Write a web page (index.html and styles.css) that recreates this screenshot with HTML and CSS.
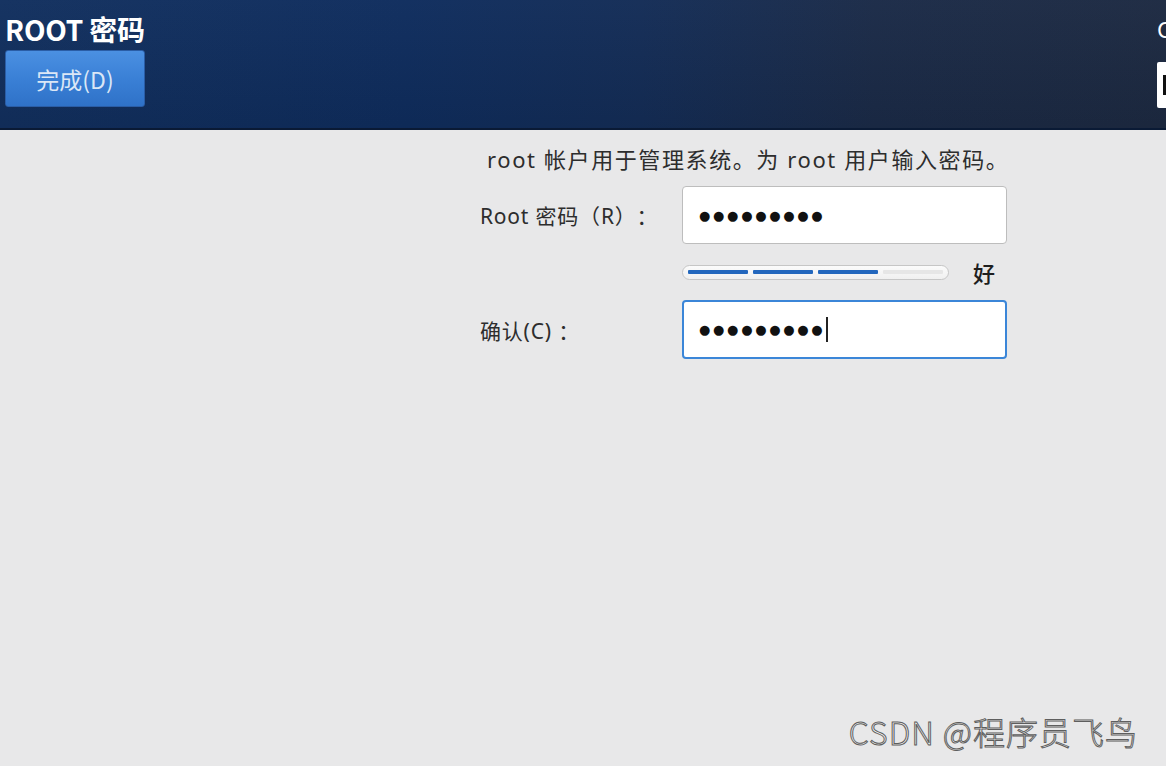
FILE: index.html
```html
<!DOCTYPE html>
<html lang="zh-CN">
<head>
<meta charset="utf-8">
<title>ROOT 密码</title>
<link rel="stylesheet" href="styles.css">
</head>
<body>
<div class="screen">
  <header class="topbar">
    <div class="topbar-left">
      <h1 class="title">ROOT 密码</h1>
      <button class="done-btn" type="button">完成(D)</button>
    </div>
    <div class="topbar-right">
      <div class="product">CENTOS 7 安装</div>
      <div class="kbd-box"><span class="kbd-mark"></span></div>
    </div>
  </header>
  <main class="content">
    <p class="desc">root 帐户用于管理系统。为 root 用户输入密码。</p>
    <div class="form">
      <label class="label">Root 密码（R）：</label>
      <div class="field"><span class="dots">●●●●●●●●●</span></div>
      <div class="spacer"></div>
      <div class="strength">
        <div class="meter">
          <span class="seg on"></span><span class="seg on"></span><span class="seg on"></span><span class="seg"></span>
        </div>
        <span class="strength-text">好</span>
      </div>
      <label class="label">确认(C) ：</label>
      <div class="field focused"><span class="dots">●●●●●●●●<span class="last">●</span></span><span class="caret"></span></div>
    </div>
    <div class="watermark">CSDN @程序员飞鸟</div>
  </main>
</div>
</body>
</html>
```
FILE: styles.css
```css
html, body {
  margin: 0;
  padding: 0;
  background: #ffffff;
}
body {
  font-family: "Noto Sans", "Noto Sans CJK SC", sans-serif;
  overflow: hidden;
  text-spacing-trim: space-all;
}
.screen {
  width: 1166px;
  height: 766px;
  display: flex;
  flex-direction: column;
  background: #e8e8e9;
  overflow: hidden;
}
.topbar {
  height: 128px;
  flex: 0 0 auto;
  display: flex;
  justify-content: space-between;
  background:
    linear-gradient(180deg, rgba(255,255,255,0.02) 0%, rgba(0,0,0,0.08) 100%),
    linear-gradient(90deg, #12305f 0%, #0f2d5e 35%, #142d57 55%, #1b2b48 75%, #1d2a42 100%);
  border-bottom: 2px solid #0a1a35;
}
.topbar-left {
  display: flex;
  flex-direction: column;
  padding-left: 5px;
  padding-top: 10px;
}
.title {
  margin: 0;
  font-family: "Noto Sans CJK SC", sans-serif;
  font-size: 28px;
  font-weight: 700;
  line-height: 38px;
  color: #ffffff;
  letter-spacing: -0.2px;
}
.done-btn {
  margin-top: 2px;
  width: 140px;
  height: 57px;
  border: 1px solid #2a5da6;
  border-radius: 3px;
  background: linear-gradient(180deg, #4b90e2 0%, #3a80d6 50%, #2f72c8 100%);
  color: #dbe7f6;
  font-family: "Noto Sans CJK SC", sans-serif;
  font-size: 23px;
  padding: 0;
  cursor: pointer;
}
.topbar-right {
  width: 9px;
  overflow: hidden;
  display: flex;
  flex-direction: column;
  padding-top: 14px;
}
.product {
  white-space: nowrap;
  color: #ffffff;
  font-size: 22px;
  line-height: 30px;
}
.kbd-box {
  margin-top: 18px;
  width: 60px;
  height: 46px;
  background: #ffffff;
  border-radius: 2px;
  display: flex;
  align-items: center;
  padding-left: 6px;
}
.kbd-mark {
  width: 3px;
  height: 20px;
  background: #111;
}
.content {
  flex: 1 1 auto;
  display: flex;
  flex-direction: column;
  position: relative;
}
.desc {
  margin: 14px 0 0 487px;
  font-size: 22px;
  line-height: 30px;
  color: #2d2d2d;
  letter-spacing: 1.6px;
  white-space: nowrap;
}
.form {
  margin: 12px 0 0 480px;
  display: grid;
  grid-template-columns: 202px 325px;
  grid-template-rows: 58px 56px 59px;
  align-items: center;
}
.label {
  font-size: 21px;
  color: #2d2d2d;
  letter-spacing: 0.8px;
  white-space: nowrap;
}
.field {
  box-sizing: border-box;
  height: 58px;
  background: #ffffff;
  border: 1px solid #bdbdbd;
  border-radius: 4px;
  display: flex;
  align-items: center;
  padding-left: 16px;
}
.field.focused {
  height: 59px;
  border: 2px solid #3b86d8;
  padding-left: 15px;
}
.dots {
  font-family: "DejaVu Sans", sans-serif;
  font-size: 13px;
  letter-spacing: 2.7px;
  color: #111;
  line-height: 1;
}
.dots .last {
  letter-spacing: 0;
}
.caret {
  width: 2px;
  height: 25px;
  background: #222;
  margin-left: 3px;
}
.strength {
  display: flex;
  align-items: center;
  gap: 24px;
  width: 340px;
}
.meter {
  box-sizing: border-box;
  width: 267px;
  height: 15px;
  border: 1px solid #c6c6c6;
  border-radius: 8px;
  background: linear-gradient(180deg, #fbfbfb 0%, #f0f0f0 100%);
  display: flex;
  align-items: center;
  gap: 5px;
  padding: 0 5px;
}
.seg {
  flex: 1 1 0;
  height: 4px;
  border-radius: 1px;
  background: #e6e6e6;
}
.seg.on {
  background: #2367bd;
}
.strength-text {
  font-family: "Noto Sans CJK SC", sans-serif;
  font-size: 22px;
  font-weight: 500;
  color: #1e1e1e;
}
.watermark {
  position: absolute;
  right: 28px;
  bottom: 12px;
  font-family: "Noto Sans CJK SC", sans-serif;
  font-size: 32px;
  font-weight: 300;
  color: #f4f4f4;
  -webkit-text-stroke: 1px #5e5e5e;
  letter-spacing: 1px;
  white-space: nowrap;
}
```
